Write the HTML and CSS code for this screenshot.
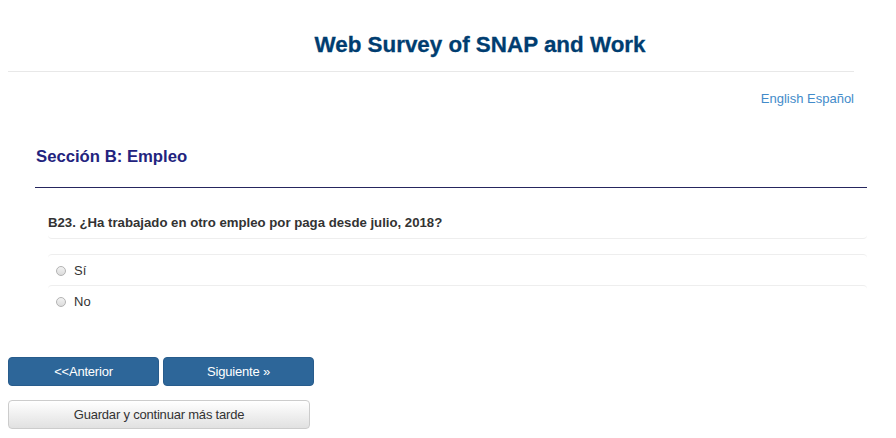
FILE: index.html
```html
<!DOCTYPE html>
<html lang="es">
<head>
  <meta charset="UTF-8" />
  <title>Web Survey of SNAP and Work</title>
  <link rel="stylesheet" href="styles.css">
</head>
<body>
  <div class="header">
    <h1 class="title">Web Survey of SNAP and Work</h1>
  </div>

  <div class="lang">
    <a href="#">English</a> <a href="#">Español</a>
  </div>

  <div class="section">
    <h2 class="section-title">Sección B: Empleo</h2>

    <div class="question">
      <div class="question-text">B23. ¿Ha trabajado en otro empleo por paga desde julio, 2018?</div>
      <div class="answers">
        <label class="answer"><input type="radio" name="b23" value="1"> Sí</label>
        <label class="answer"><input type="radio" name="b23" value="2"> No</label>
      </div>
    </div>
  </div>

  <div class="nav">
    <div class="nav-row">
      <button class="btn btn-primary">&lt;&lt;Anterior</button>
      <button class="btn btn-primary">Siguiente &raquo;</button>
    </div>
    <button class="btn btn-save">Guardar y continuar más tarde</button>
  </div>
</body>
</html>
```

FILE: styles.css
```css
body { margin: 0; font-family: "Liberation Sans", Arial, sans-serif; color: #333; background: #fff; }

.header { margin: 0 42px 0 8px; border-bottom: 1px solid #e8e8e8; padding: 33px 0 14px 98px; text-align: center; }
.title { margin: 0; font-size: 22.4px; line-height: 24px; color: #003d70; -webkit-text-stroke: 0.3px #003d70; }

.lang { margin: 0 42px 0 0; padding-top: 19px; text-align: right; font-size: 13px; line-height: 16px; }
.lang a { color: #428bca; text-decoration: none; }

.section { margin: 0 29px 0 35px; }
.section-title { margin: 0; padding: 40px 0 20px 1px; font-size: 16.7px; line-height: 20px; color: #23237e; border-bottom: 1px solid #26265e; }

.question { margin: 0 0 0 13px; }
.question-text { font-size: 13.2px; font-weight: bold; line-height: 16px; padding: 27px 0 7px; border-bottom: 1px solid #eee; border-radius: 0 0 4px 4px; }
.answers { margin-top: 15px; }
.answer { display: flex; align-items: center; height: 30px; border-top: 1px solid #eee; border-radius: 4px 4px 0 0; font-size: 13px; cursor: pointer; }
.answer input { appearance: none; -webkit-appearance: none; width: 10px; height: 10px; margin: 1px 8px 0 8px; border: 1px solid #b3b3b3; border-radius: 50%; background: linear-gradient(#f2f2f2, #dcdcdc); }

.nav { margin: 41px 0 0 8px; }
.nav-row { display: flex; gap: 4px; margin-bottom: 14px; }
.btn { font-family: "Liberation Sans", Arial, sans-serif; font-size: 13px; letter-spacing: -0.2px; height: 29px; border-radius: 4px; cursor: pointer; padding: 0; }
.btn-primary { width: 151px; background: #2d6699; color: #fff; border: 1px solid #285c8c; }
.btn-save { width: 302px; color: #333; background: linear-gradient(#fff, #e1e1e1); border: 1px solid #ccc; }
```
